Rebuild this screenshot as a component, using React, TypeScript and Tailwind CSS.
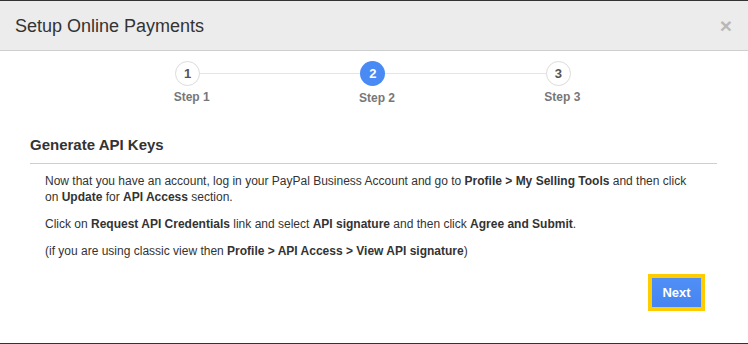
import React from 'react';

const steps = [
  { n: 1, label: 'Step 1', active: false },
  { n: 2, label: 'Step 2', active: true },
  { n: 3, label: 'Step 3', active: false },
];

const Stepper: React.FC = () => (
  <div className="relative ml-[95px] w-[556px] flex">
    <div className="absolute top-[12px] left-[16.66%] right-[16.66%] h-px bg-[#e5e5e5]" />
    {steps.map((s) => (
      <div key={s.n} className="relative flex-1 flex flex-col items-center">
        <div
          className={
            s.active
              ? 'w-[25px] h-[25px] rounded-full bg-[#4a8af4] text-white flex items-center justify-center text-[13px] font-bold'
              : 'w-[25px] h-[25px] rounded-full bg-white border border-[#dcdcdc] text-[#555] flex items-center justify-center text-[13px] font-bold'
          }
        >
          {s.n}
        </div>
        <div className={`pl-2 text-[12px] font-bold leading-[14px] text-[#777] ${s.active ? 'mt-[5px]' : 'mt-[4px]'}`}>
          {s.label}
        </div>
      </div>
    ))}
  </div>
);

export default function App() {
  return (
    <div className="w-[748px] h-[344px] bg-[#333] pt-px pb-px flex flex-col font-['Liberation_Sans',Arial,sans-serif]">
      <div className="flex-1 bg-white flex flex-col">
        <div className="h-[50px] bg-[#ececec] border-b border-[#cfcfcf] flex items-center justify-between pl-[15px] pr-[16px]">
          <h4 className="text-[18px] text-[#333] leading-[20px]">Setup Online Payments</h4>
          <button type="button" className="text-[21px] font-bold leading-none text-[#b8b8b8]">×</button>
        </div>

        <div className="pt-[10px]">
          <Stepper />
        </div>

        <div className="ml-[30px] mr-[31px] mt-[31px]">
          <h3 className="text-[15px] font-bold text-[#333] leading-[17px] pb-[10px] border-b border-[#cfcfcf]">
            Generate API Keys
          </h3>
          <div className="pl-[15px] pr-[15px] pt-[9px] text-[12px] leading-[16px] text-[#333]">
            <p className="mb-[11px]">
              Now that you have an account, log in your PayPal Business Account and go to <b>Profile &gt; My Selling Tools</b> and then click on <b>Update</b> for <b>API Access</b> section.
            </p>
            <p className="mb-[11px]">
              Click on <b>Request API Credentials</b> link and select <b>API signature</b> and then click <b>Agree and Submit</b>.
            </p>
            <p>
              (if you are using classic view then <b>Profile &gt; API Access &gt; View API signature</b>)
            </p>
          </div>
        </div>

        <div className="flex justify-end mr-[43px] mt-[15px]">
          <div className="border-[4px] border-[#ffcc00]">
            <button type="button" className="h-[29px] w-[49px] bg-gradient-to-b from-[#4f8ff5] to-[#4685f2] text-white text-[13px] font-bold">
              Next
            </button>
          </div>
        </div>
      </div>
    </div>
  );
}
